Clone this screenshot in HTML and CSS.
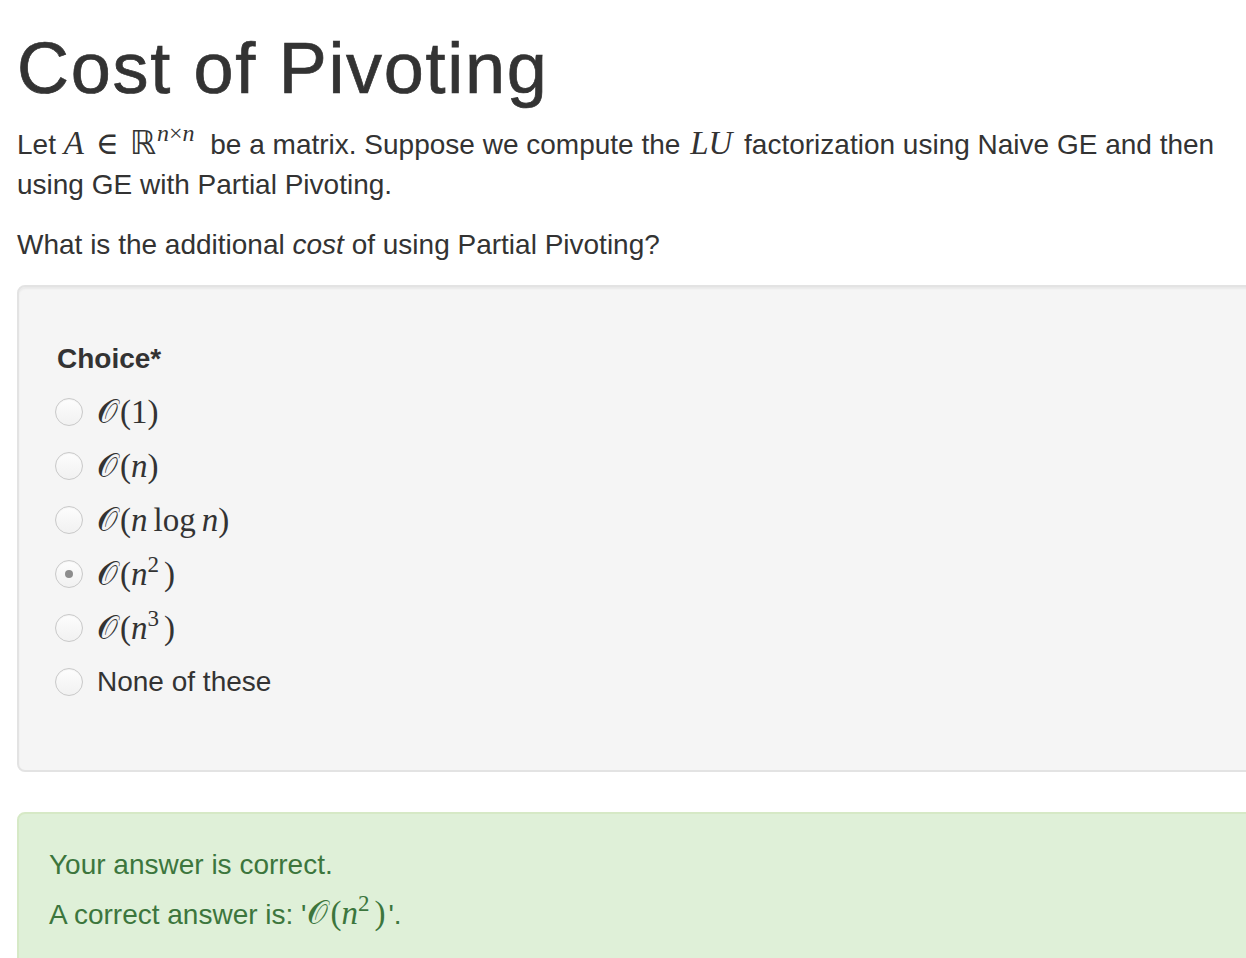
FILE: index.html
```html
<!DOCTYPE html>
<html lang="en">
<head>
<meta charset="utf-8">
<title>Cost of Pivoting</title>
<link rel="stylesheet" href="styles.css">
</head>
<body>
<div class="page">
  <h1>Cost of Pivoting</h1>
  <p>Let <span class="m"><i>A</i><span class="rel">∈</span><span class="bb">ℝ</span><sup class="sup"><i>n</i>×<i>n</i></sup></span> be a matrix. Suppose we compute the <span class="m lu"><i>LU</i></span> factorization using Naive GE and then using GE with Partial Pivoting.</p>
  <p>What is the additional <em>cost</em> of using Partial Pivoting?</p>

  <div class="well">
    <div class="label">Choice*</div>
    <div class="options">
      <div class="opt"><span class="radio"></span><span class="m"><span class="cal">𝒪</span>(1)</span></div>
      <div class="opt"><span class="radio"></span><span class="m"><span class="cal">𝒪</span>(<i>n</i>)</span></div>
      <div class="opt"><span class="radio"></span><span class="m"><span class="cal">𝒪</span>(<i>n</i><span class="fn">log</span><i>n</i>)</span></div>
      <div class="opt"><span class="radio checked"></span><span class="m"><span class="cal">𝒪</span>(<i>n</i><sup class="sup2">2</sup>)</span></div>
      <div class="opt"><span class="radio"></span><span class="m"><span class="cal">𝒪</span>(<i>n</i><sup class="sup2">3</sup>)</span></div>
      <div class="opt"><span class="radio"></span><span>None of these</span></div>
    </div>
  </div>

  <div class="alert">
    <div class="line">Your answer is correct.</div>
    <div class="line second">A correct answer is: '<span class="m ans"><span class="cal">𝒪</span>(<i>n</i><sup class="sup2">2</sup>)</span>'.</div>
  </div>
</div>
</body>
</html>
```

FILE: styles.css
```css
html, body {
  margin: 0;
  padding: 0;
  overflow: hidden;
  background: #fff;
}

body {
  font-family: "Liberation Sans", Arial, Helvetica, sans-serif;
  font-size: 28px;
  line-height: 40px;
  color: #333;
}

.page {
  width: 1240px;
  padding-left: 17px;
}

h1 {
  font-size: 72px;
  line-height: 79px;
  font-weight: normal;
  letter-spacing: 1.7px;
  -webkit-text-stroke: 0.7px #333;
  margin: 29px 0 17px;
}

p {
  margin: 0 0 20px;
}

em {
  font-style: italic;
}

/* math */
.m {
  font-family: "Liberation Serif", "Times New Roman", serif;
  font-size: 33px;
  line-height: 1;
  white-space: nowrap;
}

.m i {
  font-style: italic;
}

.lu {
  margin: 0 4px 0 2px;
}

.ans {
  margin: 0 3px 0 1px;
}

.rel {
  font-family: "DejaVu Serif", "Liberation Serif", serif;
  font-size: 31px;
  margin: 0 11px 0 12px;
}

.bb {
  font-family: "DejaVu Sans", sans-serif;
  font-size: 33px;
}

.sup {
  font-size: 24px;
  line-height: 0;
  vertical-align: 13px;
  margin-left: 1px;
  margin-right: 8px;
}

.sup2 {
  font-size: 23px;
  line-height: 0;
  vertical-align: 13px;
  margin-right: 5px;
}

.fn {
  margin: 0 6px;
}

.cal {
  font-family: "DejaVu Serif", "DejaVu Sans", serif;
  font-style: normal;
  margin-right: 2px;
}

/* well */
.well {
  background: #f5f5f5;
  border: 2px solid #e3e3e3;
  border-radius: 8px;
  box-shadow: inset 0 2px 2px rgba(0, 0, 0, 0.05);
  padding: 52px 38px 68px;
  margin-bottom: 40px;
}

.label {
  font-weight: bold;
  margin-bottom: 13px;
}

.options {
  display: flex;
  flex-direction: column;
  gap: 14px;
}

.opt {
  display: flex;
  align-items: center;
  height: 40px;
}

.radio {
  box-sizing: border-box;
  width: 28px;
  height: 28px;
  margin-left: -2px;
  margin-right: 14px;
  border: 1px solid #c9c9c9;
  border-radius: 50%;
  background: linear-gradient(#fdfdfd, #f1f1f1);
  box-shadow: inset 0 1px 1px rgba(0, 0, 0, 0.04);
  display: flex;
  align-items: center;
  justify-content: center;
  flex: none;
}

.radio.checked::after {
  content: "";
  width: 8px;
  height: 8px;
  border-radius: 50%;
  background: #8d8d8d;
}

/* alert */
.alert {
  background: #dff0d8;
  border: 2px solid #d6e9c6;
  border-radius: 8px;
  color: #3c763d;
  padding: 31px 30px 40px;
}

.alert .second {
  margin-top: 10px;
}
```
